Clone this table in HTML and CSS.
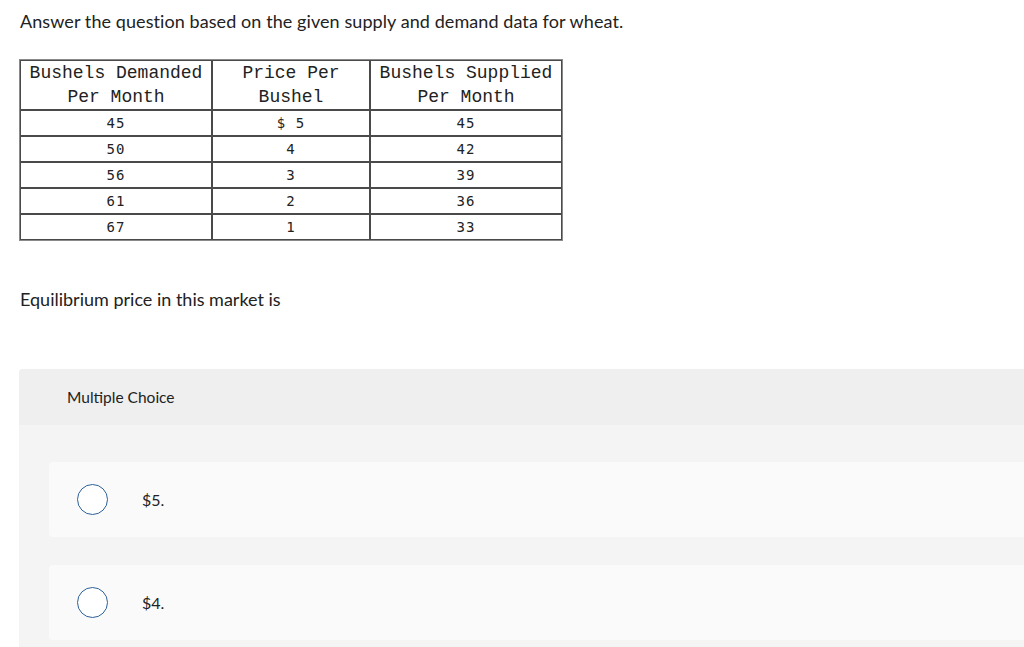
FILE: index.html
```html
<!DOCTYPE html>
<html>
<head>
<meta charset="utf-8">
<link rel="stylesheet" href="styles.css">
</head>
<body>
<div class="question">
  <p class="title">Answer the question based on the given supply and demand data for wheat.</p>
  <table class="data">
    <thead>
      <tr>
        <th class="c1">Bushels Demanded<br>Per Month</th>
        <th class="c2">Price Per<br>Bushel</th>
        <th class="c3">Bushels Supplied<br>Per Month</th>
      </tr>
    </thead>
    <tbody>
      <tr><td>45</td><td>$ 5</td><td>45</td></tr>
      <tr><td>50</td><td>4</td><td>42</td></tr>
      <tr><td>56</td><td>3</td><td>39</td></tr>
      <tr><td>61</td><td>2</td><td>36</td></tr>
      <tr><td>67</td><td>1</td><td>33</td></tr>
    </tbody>
  </table>
  <p class="prompt">Equilibrium price in this market is</p>
</div>
<div class="mc">
  <div class="mc-head">Multiple Choice</div>
  <div class="mc-body">
    <label class="option"><span class="radio"></span><span class="opt-text">$5.</span></label>
    <label class="option"><span class="radio"></span><span class="opt-text">$4.</span></label>
  </div>
</div>
</body>
</html>
```

FILE: styles.css
```css
html, body {
  margin: 0;
  padding: 0;
  background: #ffffff;
  overflow: hidden;
}
body {
  font-family: Lato, "Open Sans", "Liberation Sans", sans-serif;
  color: #222222;
}
.question {
  padding: 11px 0 0 19px;
}
.title {
  margin: 0 0 0 1px;
  font-size: 18px;
  line-height: 20px;
  letter-spacing: 0.08px;
}
.data {
  margin-top: 28px;
  border-collapse: separate;
  border-spacing: 0;
  border: 1px solid #8a8a8a;
  font-family: "Liberation Mono", "Courier New", monospace;
  font-size: 18px;
  color: #222;
}
.data th, .data td {
  border: 1px solid #4a4a4a;
  padding: 0;
  text-align: center;
  line-height: 24px;
  font-weight: normal;
}
.data th.c1, .data th.c3 { width: 190px; }
.data th.c2 { width: 156px; }
.data td {
  font-family: "DejaVu Sans Mono", monospace;
  font-size: 14px;
  letter-spacing: 1px;
}
.prompt {
  margin: 48px 0 0 1px;
  font-size: 18px;
  line-height: 20px;
}
.mc {
  margin: 60px 0 0 19px;
  background: #f4f4f4;
  border-radius: 4px 0 0 0;
  overflow: hidden;
  height: 300px;
}
.mc-head {
  background: #efefef;
  height: 56px;
  display: flex;
  align-items: center;
  padding-left: 48px;
  font-size: 15.5px;
  color: #222;
}
.mc-body {
  padding: 37px 0 0 30px;
  display: flex;
  flex-direction: column;
  gap: 28px;
}
.option {
  background: #fafafa;
  height: 75px;
  border-radius: 4px 0 0 4px;
  display: flex;
  align-items: center;
  padding-left: 28px;
}
.radio {
  width: 29px;
  height: 29px;
  border: 1.5px solid #2d6199;
  border-radius: 50%;
  background: #ffffff;
  flex: none;
}
.opt-text {
  margin-left: 34px;
  font-size: 16px;
  color: #222;
}
```
